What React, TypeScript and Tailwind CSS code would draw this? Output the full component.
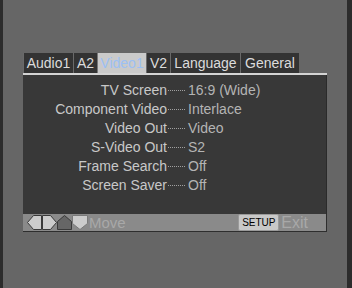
import React from "react";

const tabs = [
  { label: "Audio1", w: "w-[50px]", active: false },
  { label: "A2", w: "w-[24px]", active: false },
  { label: "Video1", w: "w-[49px]", active: true },
  { label: "V2", w: "w-[24px]", active: false },
  { label: "Language", w: "w-[70px]", active: false },
  { label: "General", w: "w-[59px]", active: false },
];

const rows = [
  ["TV Screen", "16:9 (Wide)"],
  ["Component Video", "Interlace"],
  ["Video Out", "Video"],
  ["S-Video Out", "S2"],
  ["Frame Search", "Off"],
  ["Screen Saver", "Off"],
];

export default function App() {
  return (
    <div
      className="w-[352px] h-[288px] bg-[#666666] flex overflow-hidden"
      style={{ fontFamily: '"Liberation Sans", Arial, sans-serif' }}
    >
      <div className="w-[3px] h-full bg-[#2c2c2c]" />
      <div className="flex-1 pl-[20px] pt-[53px]">
        <div className="w-[304px] flex flex-col">
          {/* tabs */}
          <div className="flex h-[20px]">
            {tabs.map((t) => (
              <div
                key={t.label}
                className={
                  t.active
                    ? `${t.w} h-full bg-[#cacaca] text-[#9cc0f4] text-[14px] leading-[21px] text-center border-l border-[#777]`
                    : `${t.w} h-full bg-[#333333] text-[#dcdcdc] text-[14px] leading-[21px] text-center border-l border-[#6a6a6a]`
                }
              >
                {t.label}
              </div>
            ))}
          </div>
          {/* top line */}
          <div className="h-[2px] bg-[#d4d4d4]" />
          {/* body */}
          <div className="h-[139px] bg-[#383838] pt-[6px] border-r border-[#2a2a2a]">
            {rows.map(([l, v]) => (
              <div key={l} className="flex items-center h-[19px] text-[14px]">
                <div className="w-[144px] text-right text-[#c8c8c8]">{l}</div>
                <div className="w-[17px] ml-[1px] border-t border-dotted border-[#a0a0a0]" />
                <div className="ml-[3px] text-[#b4b4b4]">{v}</div>
              </div>
            ))}
          </div>
          {/* bottom bar */}
          <div className="h-[18px] bg-[#8a8a8a] border-b border-r border-[#2e2e2e] flex items-center pl-[4px]">
            <svg width="62" height="15" viewBox="0 0 62 15">
              <polygon points="0.5,7.5 6.5,0.5 14.5,0.5 14.5,14.5 6.5,14.5" fill="#cccccc" stroke="#3a3a3a" strokeWidth="1" />
              <polygon points="15.5,0.5 23.5,0.5 29.5,7.5 23.5,14.5 15.5,14.5" fill="#cccccc" stroke="#3a3a3a" strokeWidth="1" />
              <polygon points="30.5,6.5 37.5,0.5 44.5,6.5 44.5,14.5 30.5,14.5" fill="#666666" stroke="#3a3a3a" strokeWidth="1" />
              <polygon points="45.5,0.5 60.5,0.5 60.5,8.5 53,14.5 45.5,8.5" fill="#cccccc" stroke="#7a7a7a" strokeWidth="1" />
            </svg>
            <span className="text-[15px] text-[#a8a8a8] leading-none">Move</span>
            <div className="ml-auto flex items-center">
              <div className="w-[41px] h-[17px] bg-[#c8c8c8] border border-[#9a9a9a] rounded-[2px] text-[10px] text-black flex items-center justify-center">
                SETUP
              </div>
              <span className="text-[16px] text-[#a8a8a8] ml-[2px] mr-[18px] leading-none">Exit</span>
            </div>
          </div>
        </div>
      </div>
      <div className="w-[5px] h-full bg-[#2c2c2c]" />
    </div>
  );
}
